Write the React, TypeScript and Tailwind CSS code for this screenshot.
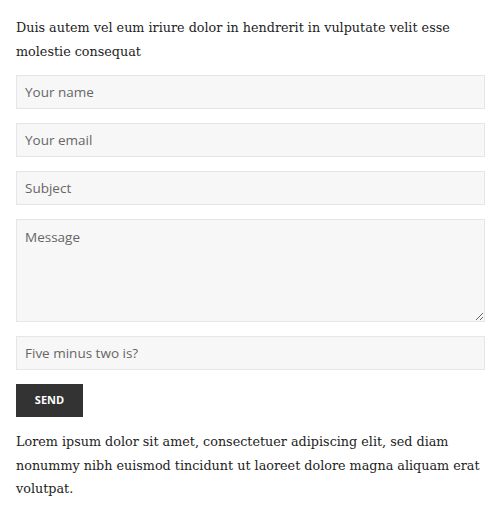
import React from "react";

const fieldCls =
  "w-full h-[34px] bg-[#f7f7f7] border border-[#e6e6e6] px-2 text-[13.5px] text-[#555] placeholder:text-[#666] font-['Open_Sans',sans-serif] outline-none";

const App = () => {
  return (
    <div className="w-[500px] h-[510px] bg-white px-4 pt-4 font-['DejaVu_Serif',serif] text-[#222]">
      <p className="w-[469px] text-[12.75px] leading-[24px]">
        Duis autem vel eum iriure dolor in hendrerit in vulputate velit esse
        molestie consequat
      </p>
      <form className="mt-[11px] flex flex-col gap-[14px] w-[469px]">
        <input className={fieldCls} placeholder="Your name" />
        <input className={fieldCls} placeholder="Your email" />
        <input className={fieldCls} placeholder="Subject" />
        <textarea
          className="w-full h-[103px] bg-[#f7f7f7] border border-[#e6e6e6] px-2 pt-[7px] text-[13.5px] text-[#555] placeholder:text-[#666] font-['Open_Sans',sans-serif] outline-none resize-y"
          placeholder="Message"
        />
        <input className={fieldCls} placeholder="Five minus two is?" />
        <button
          type="button"
          className="w-[67px] h-[33px] bg-[#333] text-white text-[11px] font-bold font-['Open_Sans',sans-serif] uppercase"
        >
          Send
        </button>
      </form>
      <p className="mt-[13px] w-[469px] text-[12.75px] leading-[23.5px]">
        Lorem ipsum dolor sit amet, consectetuer adipiscing elit, sed diam
        nonummy nibh euismod tincidunt ut laoreet dolore magna aliquam erat
        volutpat.
      </p>
    </div>
  );
};

export default App;
